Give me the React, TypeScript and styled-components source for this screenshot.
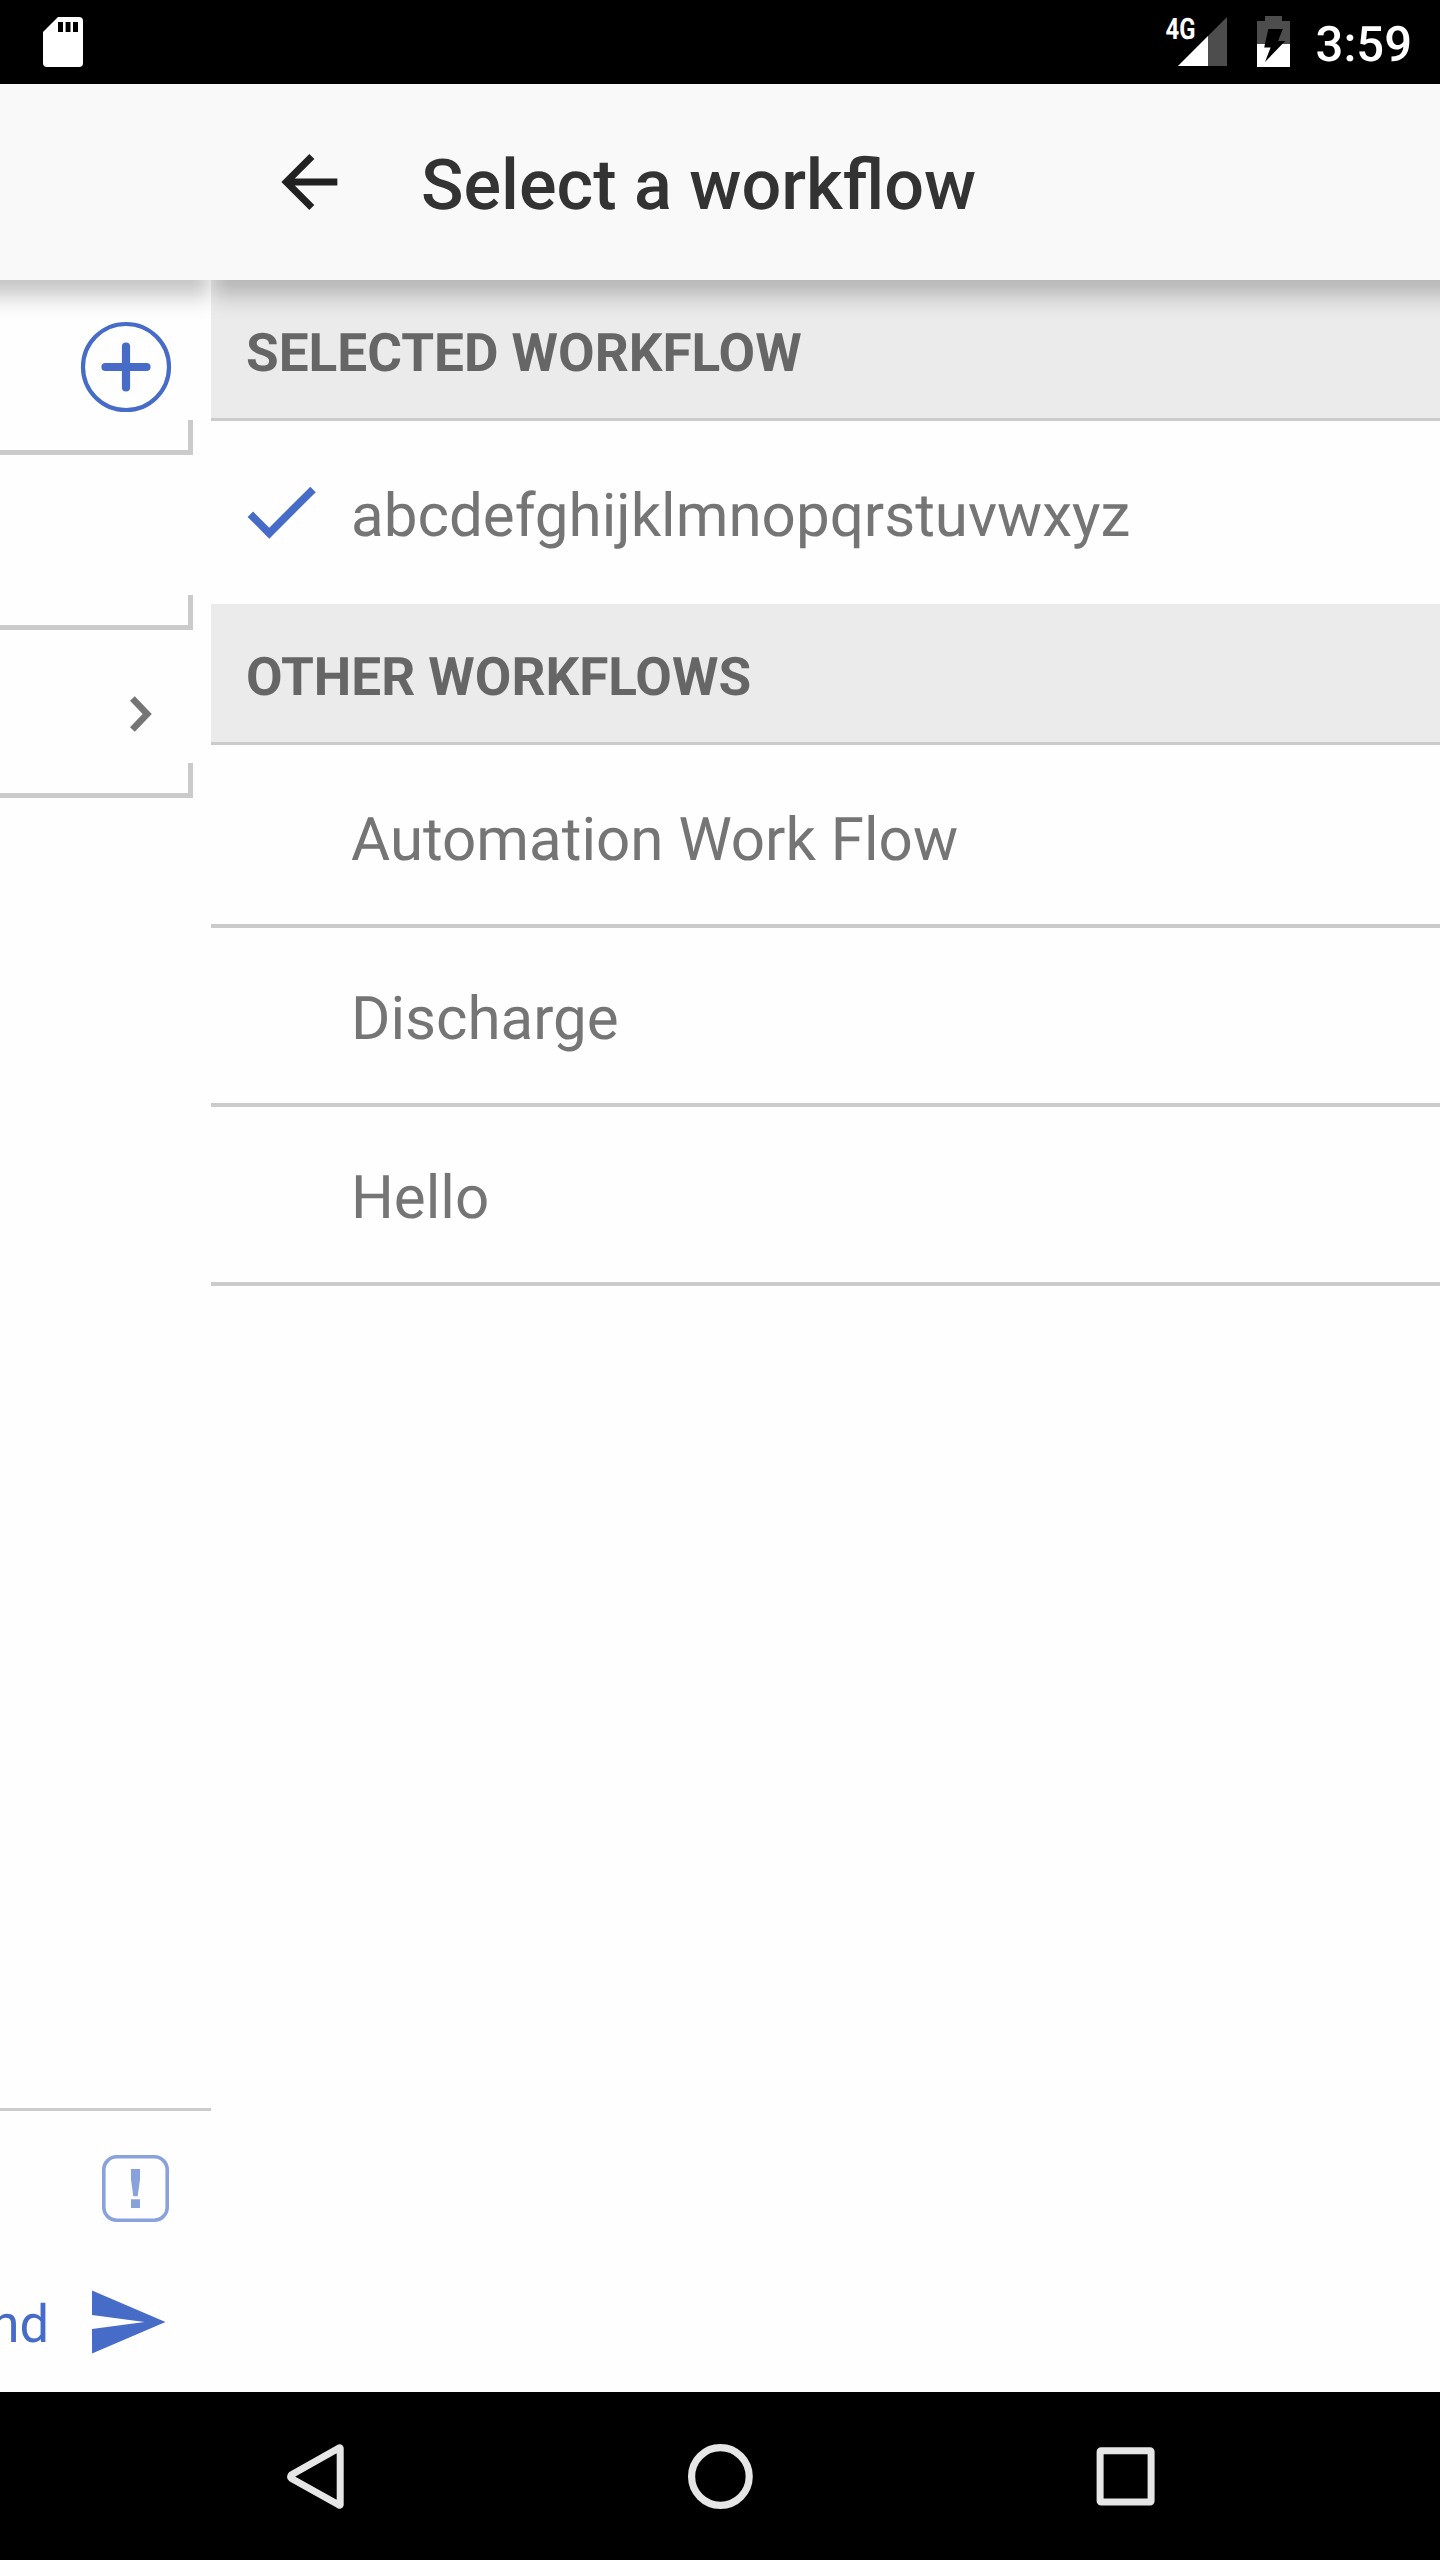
import React from "react";
import styled, { createGlobalStyle } from "styled-components";

const GlobalStyle = createGlobalStyle`
  * { box-sizing: border-box; }
  body {
    margin: 0;
    background: #fefefe;
    font-family: Roboto, "Liberation Sans", sans-serif;
    text-rendering: geometricPrecision;
  }
  svg { display: block; flex: none; }
`;

const colors = {
  accent: "#466cc8",
  accentSoft: "#8aa2dc",
  line: "#cbcbcb",
  section: "#ebebeb",
  nav: "#e6e6e6",
};

const Screen = styled.div`
  display: flex;
  flex-direction: column;
  width: 1440px;
  height: 2560px;
  overflow: hidden;
  background: #fefefe;
`;

const StatusBar = styled.header`
  display: flex;
  justify-content: space-between;
  flex: none;
  height: 84px;
  padding: 0 28px 0 43px;
  background: #000;
`;

const StatusGroup = styled.div`
  display: flex;
`;

const Clock = styled.span`
  margin-left: 26px;
  padding-top: 4px;
  color: #fff;
  font-size: 49px;
  font-weight: 500;
  line-height: 81px;
`;

const TitleBar = styled.div`
  display: flex;
  flex: none;
  height: 196px;
  padding: 0 0 0 267px;
  background: #f9f9f9;
`;

const BackButton = styled.div`
  width: 154px;
  padding-top: 56px;
`;

const Title = styled.h1`
  margin: 0;
  padding-top: 7px;
  color: #333;
  font-size: 70.2px;
  font-weight: 500;
  line-height: 190px;
`;

const Body = styled.main`
  position: relative;
  display: grid;
  grid-template-columns: 211px 1fr;
  flex: 1;
  min-height: 0;
`;

const Shadow = styled.div<{ $left: number; $width: number; $mask: string }>`
  position: absolute;
  top: 0;
  left: ${(p) => p.$left}px;
  width: ${(p) => p.$width}px;
  height: 40px;
  background: linear-gradient(
    rgba(0, 0, 0, 0.21) 0,
    rgba(0, 0, 0, 0.19) 6px,
    rgba(0, 0, 0, 0.145) 12px,
    rgba(0, 0, 0, 0.085) 19px,
    rgba(0, 0, 0, 0.035) 27px,
    rgba(0, 0, 0, 0.01) 34px,
    transparent 40px
  );
  mask-image: ${(p) => p.$mask};
`;

const Compose = styled.aside`
  display: flex;
  flex-direction: column;
  overflow: hidden;
`;

const Field = styled.div<{ $height: number }>`
  display: flex;
  flex-direction: column;
  justify-content: flex-end;
  flex: none;
  height: ${(p) => p.$height}px;
`;

const FieldIcon = styled.div<{ $right: number; $bottom: number }>`
  align-self: flex-end;
  margin: 0 ${(p) => p.$right}px ${(p) => p.$bottom}px 0;
`;

const FieldFrame = styled.div`
  flex: none;
  width: 193px;
  height: 35px;
  border: solid ${colors.line};
  border-width: 0 5px 5px 0;
`;

const ComposeFooter = styled.div`
  display: flex;
  flex-direction: column;
  align-items: flex-end;
  height: 284px;
  margin-top: auto;
  border-top: 3px solid ${colors.line};
`;

const Priority = styled.div`
  margin: 44px 42px 0 0;
`;

const Send = styled.div`
  display: flex;
  align-items: center;
  height: 84px;
  margin: 58px 42px 0 0;
  color: ${colors.accent};
  font-size: 52.5px;
  line-height: 80px;
`;

const SendLabel = styled.span`
  padding-top: 3px;
  margin-right: 36px;
`;

const Picker = styled.section`
  display: flex;
  flex-direction: column;
`;

const SectionHeader = styled.h2`
  height: 141px;
  margin: 0;
  padding: 8px 0 0 35px;
  border-bottom: 3px solid ${colors.line};
  background: ${colors.section};
  color: #666;
  font-size: 53.1px;
  font-weight: 700;
  line-height: 130px;
`;

const List = styled.ul`
  margin: 0;
  padding: 4px 0 0;
  list-style: none;
`;

const Row = styled.li<{ $divider?: boolean }>`
  display: grid;
  grid-template-columns: 117px 1fr;
  height: 179px;
  padding-left: 23px;
  border-bottom: 4px solid ${(p) => (p.$divider ? colors.line : "transparent")};
`;

const RowIcon = styled.div`
  padding-top: 40px;
`;

const RowLabel = styled.span`
  padding-top: 6px;
  color: #757575;
  font-size: 60.1px;
  line-height: 170px;
`;

const NavBar = styled.footer`
  display: flex;
  justify-content: space-between;
  align-items: center;
  flex: none;
  height: 168px;
  padding: 0 275px 0 275px;
  background: #000;
`;

const SdCard = () => (
  <svg width="40" height="84" viewBox="43 0 40 84">
    <path fill="#fff" d="M58 17H79a4 4 0 0 1 4 4V63a4 4 0 0 1-4 4H47a4 4 0 0 1-4-4V32z" />
    <path fill="#000" d="M58 22h5v10h-5zM65.6 22h4.9v10h-4.9zM73 22h5v10h-5z" />
  </svg>
);

const Signal = () => (
  <svg width="67" height="84" viewBox="1160 0 67 84">
    <path fill="#4d4d4d" d="M1178 66L1227 17V66z" />
    <path fill="#fff" d="M1178 66L1208 36V66z" />
    <text
      x="1165.5"
      y="39"
      fill="#fff"
      fontSize="29.5"
      fontWeight="700"
      textLength="30"
      lengthAdjust="spacingAndGlyphs"
    >
      4G
    </text>
  </svg>
);

const Battery = () => (
  <svg width="63" height="84" viewBox="1227 0 63 84">
    <path fill="#4d4d4d" d="M1265 16h17v5h8v23h-33v-23h8z" />
    <path fill="#fff" d="M1257 44h33v23h-33z" />
    <path fill="#000" d="M1268.3 29h14.5l-4.8 12h7.2L1265 62l5.6-14.5h-6.4z" />
  </svg>
);

const ArrowBack = () => (
  <svg width="84" height="84" viewBox="0 0 24 24" fill="#212121">
    <path d="M20.1 11H7.93l5.59-5.59L12.1 4l-8 8 8 8 1.41-1.41L7.93 13H20.1v-2z" />
  </svg>
);

const AddIcon = () => (
  <svg width="92" height="92" viewBox="80 321 92 92" fill="none" stroke={colors.accent}>
    <circle cx="126" cy="367" r="43" strokeWidth="4.2" />
    <path strokeWidth="8.2" strokeLinecap="round" d="M105.5 367h41M126 346.5v41" />
  </svg>
);

const ChevronIcon = () => (
  <svg width="24" height="38" viewBox="129 695 24 38" fill="none" stroke="#757575">
    <path strokeWidth="6.6" d="M132.4 698.5L147.2 714l-14.8 15.5" />
  </svg>
);

const CheckIcon = () => (
  <svg width="93" height="93" viewBox="0 0 24 24" fill={colors.accent}>
    <path d="M9.1 16.17L4.93 12l-1.42 1.41L9.1 19 21.1 7l-1.41-1.41z" />
  </svg>
);

const PriorityIcon = () => (
  <svg width="67" height="67" viewBox="0 0 67 67">
    <rect x="1.8" y="1.8" width="63.4" height="63.4" rx="13" fill="none" stroke={colors.accentSoft} strokeWidth="3.6" />
    <path fill={colors.accentSoft} d="M29 14h9v10.5l-2.3 16.7h-4.4L29 24.5zM29 44.3h9v8.7h-9z" />
  </svg>
);

const SendIcon = () => (
  <svg width="84" height="84" viewBox="0 0 24 24" fill={colors.accent}>
    <path d="M2.01 21L23 12 2.01 3 2 10l15 2-15 2z" />
  </svg>
);

const NavBack = () => (
  <svg width="80" height="84" viewBox="275 2434 80 84" fill="none" stroke={colors.nav} strokeLinejoin="round">
    <path strokeWidth="7" d="M340.2 2448.2V2504.8Q340 2505.5 339 2505L291.5 2478.5Q289.5 2476.7 291.5 2474.8L339 2448Q340 2447.5 340.2 2448.2z" />
  </svg>
);

const NavHome = () => (
  <svg width="70" height="70" viewBox="0 0 70 70" fill="none" stroke={colors.nav}>
    <circle cx="35.4" cy="35.5" r="28.8" strokeWidth="7.2" />
  </svg>
);

const NavRecents = () => (
  <svg width="80" height="84" viewBox="1085 2434 80 84" fill="none" stroke={colors.nav} strokeLinejoin="round">
    <rect x="1100.1" y="2450.7" width="51" height="51.3" rx="1" strokeWidth="7" />
  </svg>
);

const otherWorkflows = ["Automation Work Flow", "Discharge", "Hello"];

const fade = (dir: string) => `linear-gradient(to ${dir}, rgba(0,0,0,.5) 0, rgba(0,0,0,.8) 9px, #000 19px)`;

export default function App() {
  return (
    <Screen>
      <GlobalStyle />
      <StatusBar>
        <SdCard />
        <StatusGroup>
          <Signal />
          <Battery />
          <Clock>3:59</Clock>
        </StatusGroup>
      </StatusBar>
      <TitleBar>
        <BackButton>
          <ArrowBack />
        </BackButton>
        <Title>Select a workflow</Title>
      </TitleBar>
      <Body>
        <Compose>
          <Field $height={175}>
            <FieldIcon $right={39} $bottom={7}>
              <AddIcon />
            </FieldIcon>
            <FieldFrame />
          </Field>
          <Field $height={175}>
            <FieldFrame />
          </Field>
          <Field $height={168}>
            <FieldIcon $right={58} $bottom={30}>
              <ChevronIcon />
            </FieldIcon>
            <FieldFrame />
          </Field>
          <ComposeFooter>
            <Priority>
              <PriorityIcon />
            </Priority>
            <Send>
              <SendLabel>Send</SendLabel>
              <SendIcon />
            </Send>
          </ComposeFooter>
        </Compose>
        <Picker>
          <SectionHeader>SELECTED WORKFLOW</SectionHeader>
          <List>
            <Row>
              <RowIcon>
                <CheckIcon />
              </RowIcon>
              <RowLabel>abcdefghijklmnopqrstuvwxyz</RowLabel>
            </Row>
          </List>
          <SectionHeader>OTHER WORKFLOWS</SectionHeader>
          <List>
            {otherWorkflows.map((name) => (
              <Row key={name} $divider>
                <RowIcon />
                <RowLabel>{name}</RowLabel>
              </Row>
            ))}
          </List>
        </Picker>
        <Shadow $left={0} $width={211} $mask={fade("left")} />
        <Shadow $left={211} $width={1229} $mask={fade("right")} />
      </Body>
      <NavBar>
        <NavBack />
        <NavHome />
        <NavRecents />
      </NavBar>
    </Screen>
  );
}
